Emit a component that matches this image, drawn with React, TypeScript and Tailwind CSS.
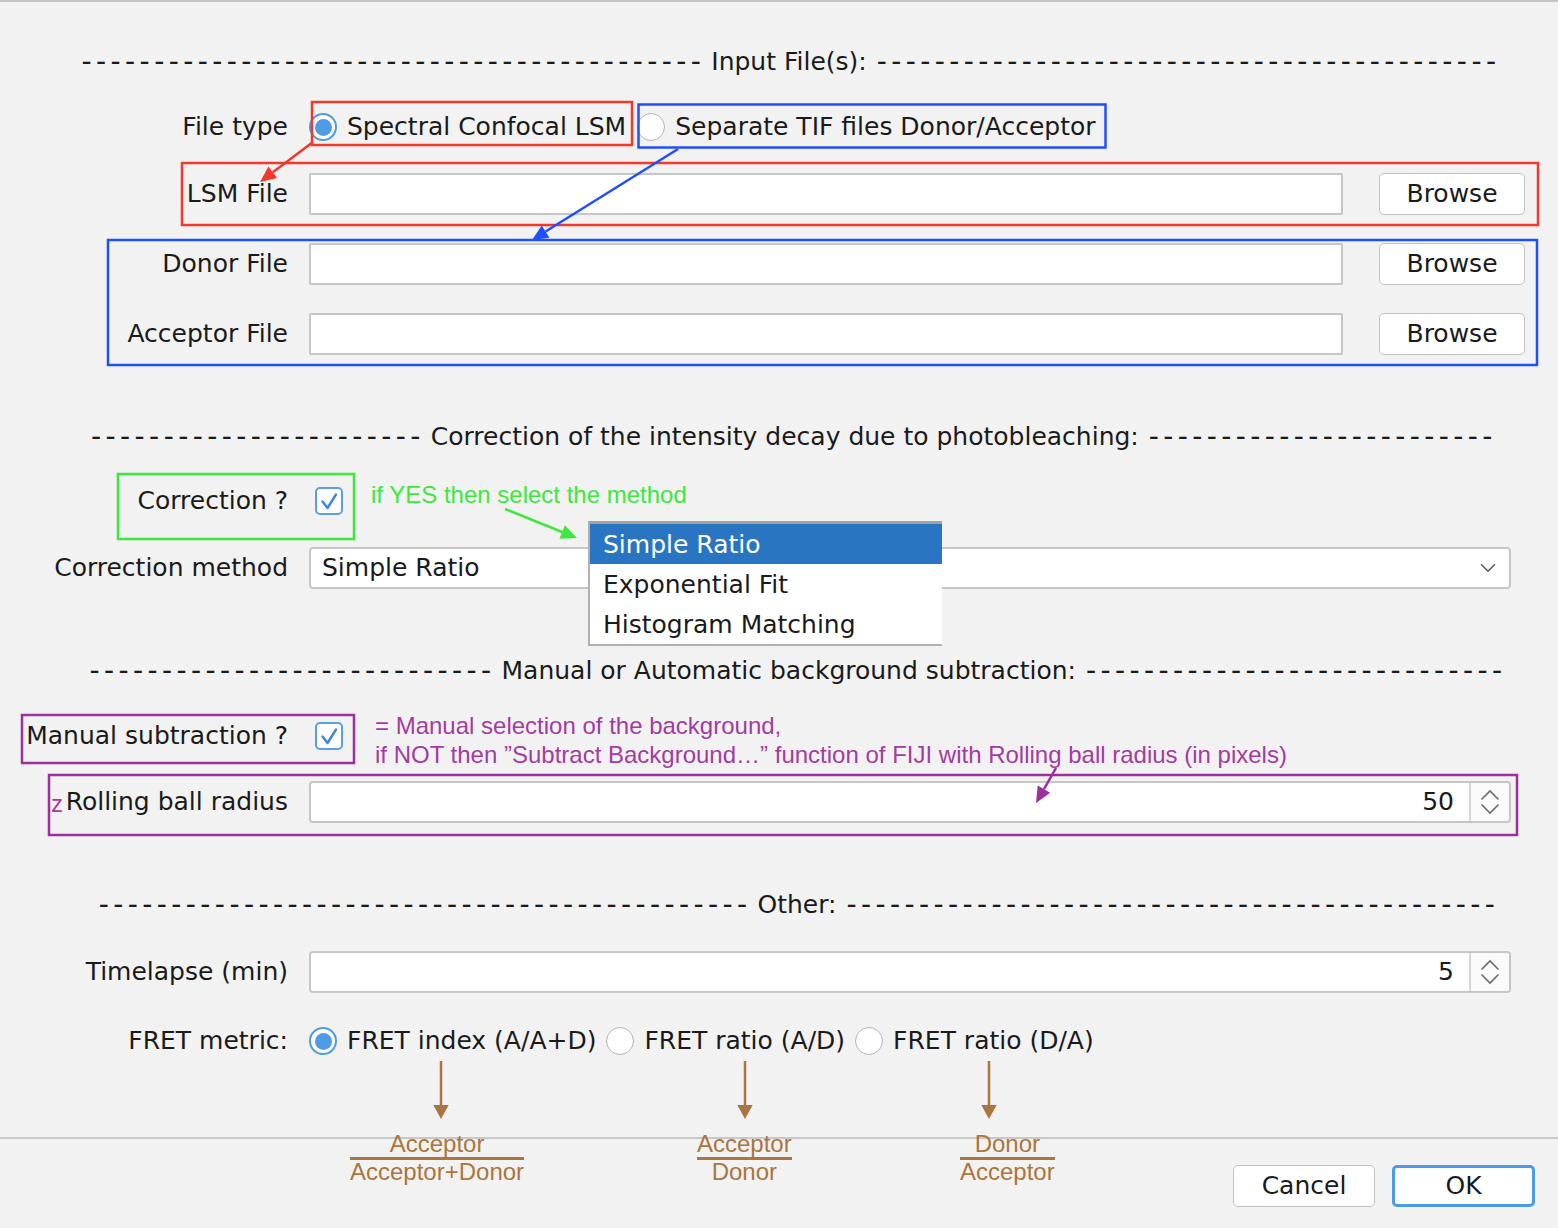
import { ChevronDown } from "lucide-react";
import type { ReactNode } from "react";

const RED = "#f5382c";
const BLUE = "#1f4ffa";
const GREEN = "#3de83d";
const PURPLE = "#9c309c";
const BROWN = "#a9763f";

function SectionHeader({ title, left, right, className = "pl-[24px]" }: { title: string; left: number; right: number; className?: string }) {
  return (
    <div className={`flex h-[30px] items-center justify-center whitespace-nowrap ${className}`}>
      <span className="text-[28px] leading-[30px] tracking-[4.4px]">{"-".repeat(left)}</span>
      <span className="ml-[6px] mr-[10px]">{title}</span>
      <span className="text-[28px] leading-[30px] tracking-[4.4px]">{"-".repeat(right)}</span>
    </div>
  );
}

function Row({ label, children, className = "" }: { label: ReactNode; children: ReactNode; className?: string }) {
  return (
    <div className={`grid h-[42px] grid-cols-[288px_1fr] items-center gap-x-[21px] ${className}`}>
      <div className="whitespace-nowrap text-right">{label}</div>
      <div className="flex items-center">{children}</div>
    </div>
  );
}

function Radio({ checked }: { checked?: boolean }) {
  if (checked) {
    return (
      <span className="flex h-[28px] w-[28px] shrink-0 items-center justify-center rounded-full border-2 border-[#4f9be6] bg-white">
        <span className="h-[17px] w-[17px] rounded-full bg-[#4f9be6]" />
      </span>
    );
  }
  return <span className="h-[28px] w-[28px] shrink-0 rounded-full border-[1.5px] border-[#b4b4b4] bg-white" />;
}

function RadioOption({ label, checked }: { label: string; checked?: boolean }) {
  return (
    <span className="flex items-center gap-[10px] whitespace-nowrap">
      <Radio checked={checked} />
      {label}
    </span>
  );
}

function Checkbox() {
  return (
    <span className="ml-[6px] flex h-[28px] w-[28px] items-center justify-center rounded-[5px] border-2 border-[#5a9fe6] bg-white">
      <svg width="20" height="20" viewBox="0 0 20 20">
        <path d="M3.5 10.5 L8.5 17 L17 3.5" fill="none" stroke="#3a86e0" strokeWidth="2.4" strokeLinecap="round" strokeLinejoin="round" />
      </svg>
    </span>
  );
}

function FileRow({ label, className = "" }: { label: string; className?: string }) {
  return (
    <Row label={label} className={className}>
      <div className="h-[42px] w-[1034px] rounded-[2px] border-2 border-[#c6c6c6] bg-white" />
      <button
        type="button"
        className="ml-[36px] h-[42px] w-[146px] rounded-[5px] border-[1.5px] border-[#c3c3c3] bg-white text-[#1a1a1a]"
      >
        Browse
      </button>
    </Row>
  );
}

function Spinner({ value }: { value: string }) {
  return (
    <div className="flex h-[42px] w-[1202px] rounded-[4px] border-2 border-[#c6c6c6] bg-white">
      <div className="flex flex-1 items-center justify-end pr-[15px]">{value}</div>
      <div className="flex w-[40px] items-center justify-center rounded-r-[4px] border-l-2 border-[#d6d6d6] bg-[#fafafa]">
        <svg width="20" height="26" viewBox="0 0 20 26">
          <path d="M1.5 10.5 L10 2 L18.5 10.5 M1.5 15.5 L10 24 L18.5 15.5" fill="none" stroke="#6b6b6b" strokeWidth="1.6" />
        </svg>
      </div>
    </div>
  );
}

function Arrow({
  x1, y1, x2, y2, color, width = 2.5, head = 16, spread = 0.45,
}: {
  x1: number; y1: number; x2: number; y2: number; color: string; width?: number; head?: number; spread?: number;
}) {
  const a = Math.atan2(y2 - y1, x2 - x1);
  const bx = x2 - head * Math.cos(a);
  const by = y2 - head * Math.sin(a);
  const px = Math.sin(a) * head * spread;
  const py = -Math.cos(a) * head * spread;
  return (
    <g>
      <line x1={x1} y1={y1} x2={bx} y2={by} stroke={color} strokeWidth={width} />
      <polygon points={`${x2},${y2} ${bx + px},${by + py} ${bx - px},${by - py}`} fill={color} />
    </g>
  );
}

function Fraction({ top, bottom, className }: { top: string; bottom: string; className: string }) {
  return (
    <div className={`absolute flex flex-col items-center text-[24px] leading-[24px] text-[#a9763f] ${className}`}>
      <span className="whitespace-nowrap">{top}</span>
      <span className="mt-[1px] h-[3px] w-full bg-[#a9763f]" />
      <span className="whitespace-nowrap">{bottom}</span>
    </div>
  );
}

export default function App() {
  return (
    <div className="relative h-[1228px] w-[1558px] overflow-hidden bg-[#f2f2f2] font-['DejaVu_Sans',sans-serif] text-[25px] leading-[32px] text-[#1a1a1a]">
      <div className="h-[2px] bg-[#c4c4c4]" />

      {/* Input files */}
      <div className="mt-[45px]">
        <SectionHeader title="Input File(s):" left={43} right={43} />
      </div>
      <Row label="File type" className="mt-[29px]">
        <div className="flex items-center gap-[11px]">
          <RadioOption label="Spectral Confocal LSM" checked />
          <RadioOption label="Separate TIF files Donor/Acceptor" />
        </div>
      </Row>
      <FileRow label="LSM File" className="mt-[25px]" />
      <FileRow label="Donor File" className="mt-[28px]" />
      <FileRow label="Acceptor File" className="mt-[28px]" />

      {/* Photobleaching correction */}
      <div className="mt-[67px]">
        <SectionHeader title="Correction of the intensity decay due to photobleaching:" left={23} right={24} className="pl-[30px]" />
      </div>
      <Row label="Correction ?" className="mt-[28px]">
        <Checkbox />
      </Row>
      <Row label="Correction method" className="mt-[25px]">
        <div className="flex h-[42px] w-[1202px] items-center justify-between rounded-[4px] border-2 border-[#c6c6c6] bg-white pl-[11px] pr-[8px]">
          <span>Simple Ratio</span>
          <ChevronDown size={26} strokeWidth={1.5} className="text-[#5a5a5a]" />
        </div>
      </Row>

      {/* Background subtraction */}
      <div className="mt-[67px]">
        <SectionHeader title="Manual or Automatic background subtraction:" left={28} right={29} className="pl-[38px]" />
      </div>
      <Row label="Manual subtraction ?" className="mt-[29px]">
        <Checkbox />
      </Row>
      <Row label="Rolling ball radius" className="mt-[24px]">
        <Spinner value="50" />
      </Row>

      {/* Other */}
      <div className="mt-[67px]">
        <SectionHeader title="Other:" left={45} right={45} className="pl-[40px]" />
      </div>
      <Row label="Timelapse (min)" className="mt-[31px]">
        <Spinner value="5" />
      </Row>
      <Row label="FRET metric:" className="mt-[27px]">
        <div className="flex items-center gap-[10px]">
          <RadioOption label="FRET index (A/A+D)" checked />
          <RadioOption label="FRET ratio (A/D)" />
          <RadioOption label="FRET ratio (D/A)" />
        </div>
      </Row>

      {/* Footer */}
      <div className="mt-[75px] flex justify-end gap-[17px] border-t-2 border-[#c8c8c8] pr-[23px] pt-[26px]">
        <button type="button" className="h-[42px] w-[142px] rounded-[5px] border-[1.5px] border-[#c0c0c0] bg-white">
          Cancel
        </button>
        <button type="button" className="h-[42px] w-[143px] rounded-[5px] border-[3px] border-[#4d9ae6] bg-white">
          OK
        </button>
      </div>

      {/* Open dropdown list */}
      <div className="absolute left-[588px] top-[521px] w-[354px] border-b-2 border-l-2 border-t-[3px] border-[#b0b0b0] border-t-[#a4a4a4] bg-white">
        <div className="flex h-[40px] items-center bg-[#2a75c2] px-[13px] pt-[2px] text-white">Simple Ratio</div>
        <div className="flex h-[40px] items-center px-[13px] pt-[2px]">Exponential Fit</div>
        <div className="flex h-[40px] items-center px-[13px] pt-[2px]">Histogram Matching</div>
      </div>

      {/* Annotations */}
      <svg className="pointer-events-none absolute inset-0" width="1558" height="1228" viewBox="0 0 1558 1228">
        <g fill="none" strokeWidth="2.5">
          <rect x="312" y="102" width="320" height="43" stroke={RED} />
          <rect x="182" y="163" width="1356" height="62" stroke={RED} />
          <rect x="638.5" y="104.5" width="467" height="43" stroke={BLUE} />
          <rect x="108" y="240" width="1429" height="125" stroke={BLUE} />
          <rect x="118" y="474" width="236" height="65" stroke={GREEN} />
          <rect x="22" y="715" width="332" height="48" stroke={PURPLE} />
          <rect x="49" y="775" width="1468" height="60" stroke={PURPLE} />
        </g>
        <Arrow x1={313} y1={142} x2={260} y2={182} color={RED} />
        <Arrow x1={678} y1={149} x2={532} y2={240} color={BLUE} />
        <Arrow x1={505} y1={509} x2={577} y2={538} color={GREEN} />
        <Arrow x1={1056} y1={768} x2={1036} y2={803} color={PURPLE} />
        <Arrow x1={441} y1={1061} x2={441} y2={1119} color={BROWN} head={14} spread={0.55} />
        <Arrow x1={745} y1={1061} x2={745} y2={1119} color={BROWN} head={14} spread={0.55} />
        <Arrow x1={989} y1={1061} x2={989} y2={1119} color={BROWN} head={14} spread={0.55} />
      </svg>

      <div className="absolute inset-0 font-['Liberation_Sans',Arial,sans-serif] text-[24px]">
        <div className="absolute left-[371px] top-[483px] whitespace-nowrap leading-[24px] text-[#3de83d]">
          if YES then select the method
        </div>
        <div className="absolute left-[375px] top-[711px] whitespace-nowrap leading-[29px] text-[#a23ca2]">
          <div>= Manual selection of the background,</div>
          <div>if NOT then ”Subtract Background…” function of FIJI with Rolling ball radius (in pixels)</div>
        </div>
        <div className="absolute left-[51px] top-[792px] leading-[24px] text-[#a23ca2]">z</div>
        <Fraction top="Acceptor" bottom="Acceptor+Donor" className="left-[350px] top-[1132px]" />
        <Fraction top="Acceptor" bottom="Donor" className="left-[697px] top-[1132px]" />
        <Fraction top="Donor" bottom="Acceptor" className="left-[960px] top-[1132px]" />
      </div>
    </div>
  );
}
